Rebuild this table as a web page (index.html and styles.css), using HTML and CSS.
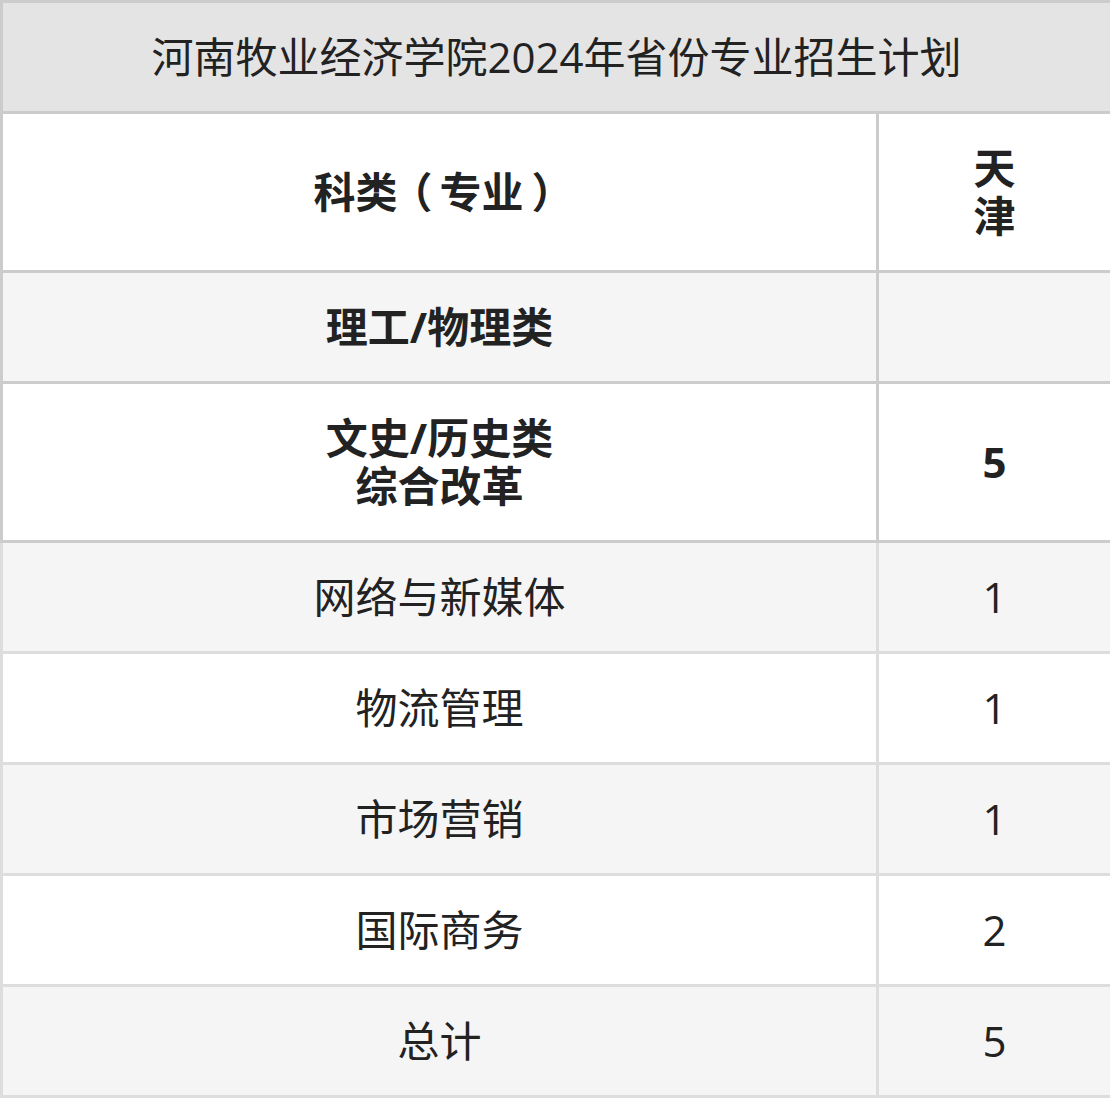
FILE: index.html
```html
<!DOCTYPE html>
<html lang="zh-CN">
<head>
<meta charset="utf-8">
<title>河南牧业经济学院2024年省份专业招生计划</title>
<link rel="stylesheet" href="styles.css">
</head>
<body>
<table class="plan">
  <colgroup><col class="col-major"><col class="col-num"></colgroup>
  <thead>
    <tr class="title-row"><th colspan="2" class="title">河南牧业经济学院2024年省份专业招生计划</th></tr>
    <tr class="head-row"><th>科类<span class="paren-open">（</span>专业<span class="paren-close">）</span></th><th>天<br>津</th></tr>
    <tr class="stripe"><th>理工/物理类</th><th></th></tr>
    <tr><th>文史/历史类<br>综合改革</th><th>5</th></tr>
  </thead>
  <tbody>
    <tr class="stripe"><td>网络与新媒体</td><td>1</td></tr>
    <tr><td>物流管理</td><td>1</td></tr>
    <tr class="stripe"><td>市场营销</td><td>1</td></tr>
    <tr><td>国际商务</td><td>2</td></tr>
    <tr class="stripe"><td>总计</td><td>5</td></tr>
  </tbody>
</table>
</body>
</html>
```

FILE: styles.css
```css
html, body {
  margin: 0;
  padding: 0;
  background: #ffffff;
}

.plan {
  width: 1110px;
  border-collapse: collapse;
  font-family: "Open Sans", "Noto Sans CJK SC", sans-serif;
  font-size: 42px;
  line-height: 48px;
  color: #222222;
  table-layout: fixed;
}

.col-major {
  width: 876px;
}

.col-num {
  width: 234px;
}

.plan th,
.plan td {
  text-align: center;
  vertical-align: middle;
  padding: 30px 0;
}

.plan thead th {
  border: 3px solid #cccccc;
  font-weight: 700;
}

.plan tbody td {
  border: 3px solid #dddddd;
  font-weight: 400;
}

.plan .title {
  font-weight: 400;
  background: #e4e4e4;
  padding: 30px 0;
}

.paren-open {
  margin: 0 7px 0 -7px;
}

.paren-close {
  margin: 0 -8px 0 8px;
}

.stripe th,
.stripe td {
  background: #f5f5f5;
}
```
